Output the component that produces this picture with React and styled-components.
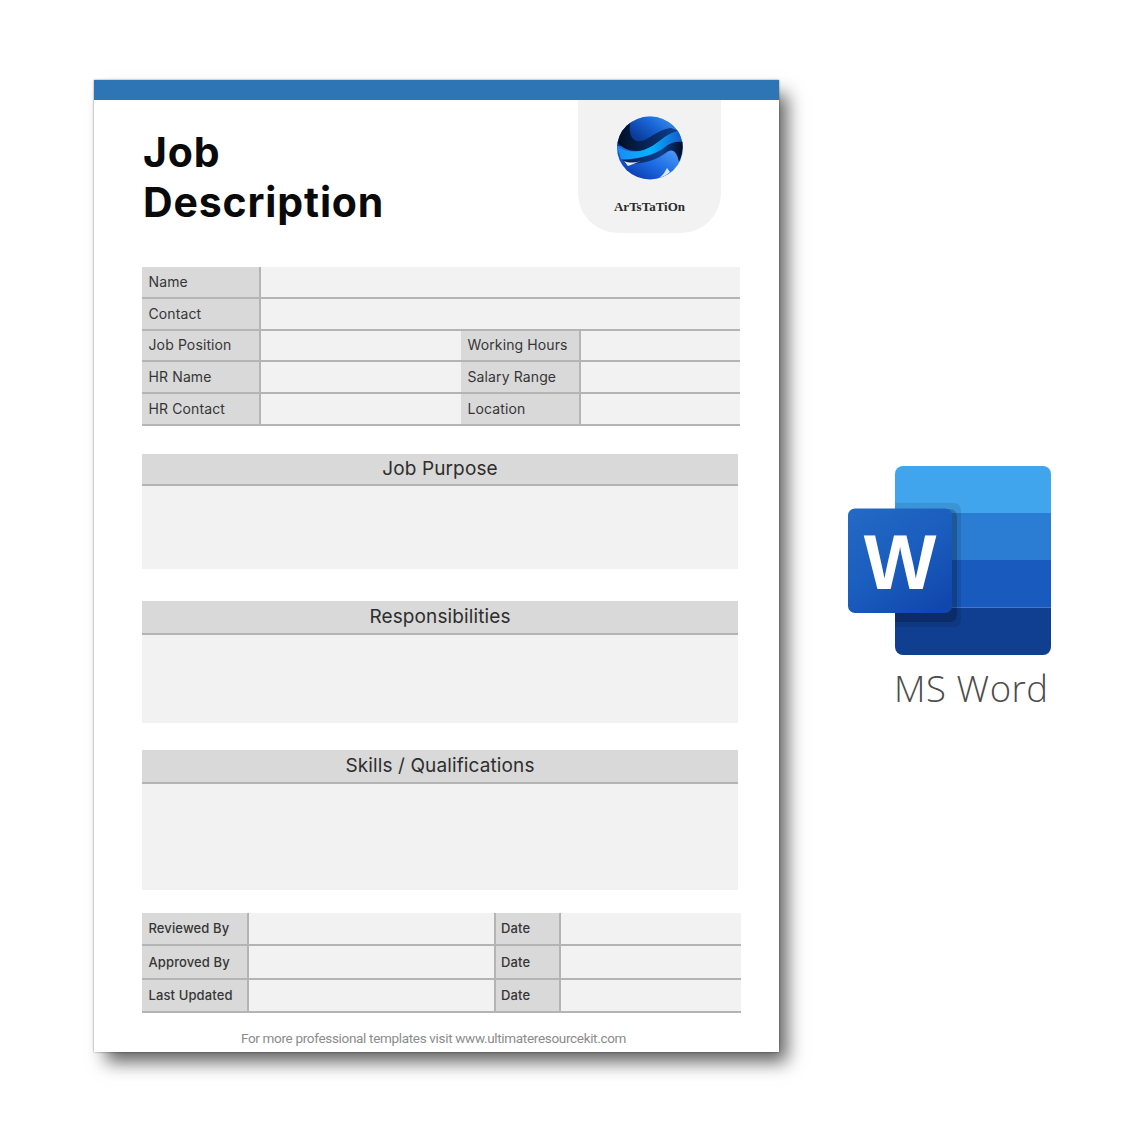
// App.jsx
import React from 'react';
import styled, { createGlobalStyle } from 'styled-components';

const GlobalStyle = createGlobalStyle`
  html, body {
    margin: 0;
    padding: 0;
    background: #fff;
  }
`;

const Stage = styled.div`
  width: 1134px;
  height: 1134px;
  box-sizing: border-box;
  padding: 80px 0 0 94px;
  display: flex;
  align-items: flex-start;
  overflow: hidden;
  font-family: Inter, "Liberation Sans", sans-serif;
`;

const Sheet = styled.div`
  width: 685px;
  height: 972px;
  box-sizing: border-box;
  flex-shrink: 0;
  background: #fff;
  box-shadow: 0 0 2px rgba(0, 0, 0, 0.45), 10px 12px 17px -2px rgba(0, 0, 0, 0.62);
`;

const TopBar = styled.div`
  height: 20px;
  background: #2e75b5;
`;

const Content = styled.div`
  padding-left: 48px;
`;

const Header = styled.div`
  height: 167px;
  width: 579px;
  display: flex;
  justify-content: space-between;
  align-items: flex-start;
`;

const Title = styled.h1`
  margin: 28px 0 0 1px;
  font-size: 41px;
  line-height: 49.5px;
  font-weight: 700;
  color: #0a0a0a;
  letter-spacing: 0.85px;
`;

const LogoBadge = styled.div`
  width: 143px;
  height: 133px;
  background: #f2f2f2;
  border-radius: 0 0 40px 40px;
  display: flex;
  flex-direction: column;
  align-items: center;
  padding-top: 16px;
  box-sizing: border-box;
`;

const LogoName = styled.div`
  margin-top: 19px;
  font-family: "Liberation Serif", serif;
  font-weight: 700;
  font-size: 13px;
  line-height: 16px;
  color: #2b2b2b;
`;

const InfoGrid = styled.div`
  display: grid;
  grid-template-columns: ${({ $columns }) => $columns};
  grid-auto-rows: ${({ $rowHeight }) => $rowHeight}px;
  width: ${({ $width }) => $width}px;
  margin-top: ${({ $top }) => $top || 0}px;
`;

const Label = styled.div`
  background: #d9d9d9;
  border-bottom: 2px solid #b4b4b4;
  border-right: 2px solid #b4b4b4;
  ${({ $ruled }) => $ruled && 'border-left: 2px solid #b4b4b4;'}
  box-sizing: border-box;
  display: flex;
  align-items: center;
  padding: 0 0 1px ${({ $ruled }) => ($ruled ? 5 : 6.5)}px;
  font-size: ${({ $small }) => ($small ? 13 : 14)}px;
  font-weight: ${({ $small }) => ($small ? 500 : 400)};
  letter-spacing: 0.12px;
  color: #363636;
  white-space: nowrap;
`;

const Value = styled.div`
  background: #f2f2f2;
  border-bottom: 2px solid #b4b4b4;
  box-sizing: border-box;
  grid-column: span ${({ $span }) => $span || 1};
`;

const Section = styled.section`
  width: 596px;
  margin-top: ${({ $top }) => $top}px;
`;

const SectionHead = styled.div`
  height: ${({ $height }) => $height}px;
  box-sizing: border-box;
  background: #d9d9d9;
  border-bottom: 2px solid #b4b4b4;
  display: flex;
  align-items: center;
  justify-content: center;
  font-size: 19px;
  letter-spacing: 0.12px;
  color: #2e2e2e;
`;

const SectionBody = styled.div`
  height: ${({ $height }) => $height}px;
  background: #f2f2f2;
`;

const FooterNote = styled.div`
  width: 583px;
  margin-top: 17px;
  text-align: center;
  font-family: Roboto, "Liberation Sans", sans-serif;
  font-size: 13.5px;
  letter-spacing: -0.32px;
  line-height: 17px;
  color: #8c8c8c;
`;

const ProductColumn = styled.div`
  margin: 386px 0 0 69px;
  display: flex;
  flex-direction: column;
  align-items: flex-start;
`;

const ProductName = styled.div`
  margin: 11px 0 0 46px;
  font-family: "Open Sans", sans-serif;
  font-size: 36.5px;
  font-weight: 300;
  line-height: 44px;
  letter-spacing: 0.55px;
  color: #4c4c4c;
  white-space: nowrap;
`;

const SphereLogo = () => (
  <svg width="66" height="64" viewBox="0 0 66 64">
    <defs>
      <linearGradient id="sphereTop" x1="0.9" y1="0" x2="0.15" y2="0.45">
        <stop offset="0" stopColor="#4a9af2" />
        <stop offset="0.5" stopColor="#1a68d8" />
        <stop offset="1" stopColor="#0b3c9c" />
      </linearGradient>
      <linearGradient id="sphereBottom" x1="0.75" y1="0.35" x2="0.35" y2="1">
        <stop offset="0" stopColor="#5aa6fb" />
        <stop offset="0.55" stopColor="#1f6fe6" />
        <stop offset="1" stopColor="#0d40b4" />
      </linearGradient>
      <linearGradient id="sphereBand" x1="0" y1="0" x2="1" y2="0">
        <stop offset="0" stopColor="#1a8cf2" />
        <stop offset="0.5" stopColor="#04b4ff" />
        <stop offset="1" stopColor="#1557c8" />
      </linearGradient>
      <linearGradient id="sphereDark" x1="0" y1="0" x2="1" y2="0">
        <stop offset="0" stopColor="#020f26" />
        <stop offset="0.55" stopColor="#08295f" />
        <stop offset="1" stopColor="#0d4296" />
      </linearGradient>
      <linearGradient id="sphereDarkLow" x1="0" y1="0" x2="1" y2="0">
        <stop offset="0" stopColor="#07204f" />
        <stop offset="0.65" stopColor="#0e3f8f" />
        <stop offset="1" stopColor="#020c20" />
      </linearGradient>
      <clipPath id="sphereClip">
        <ellipse cx="33" cy="32" rx="33" ry="31.5" />
      </clipPath>
    </defs>
    <g clipPath="url(#sphereClip)">
      <rect width="66" height="64" fill="url(#sphereBottom)" />
      <path d="M0 0H66V18L30 30L0 30Z" fill="url(#sphereTop)" />
      <path d="M1 27C2 17 7 9 14 5C11 13 13 23 20 25C30 27 38 14 54 12L62 15C48 17 40 30 27 34C16 37 6 33 1 27Z" fill="url(#sphereDark)" />
      <path d="M14 2C10 5 7 9 6 13C9 8 13 5 19 2Z" fill="#e3eefc" />
      <path d="M0 30C8 36 18 37 27 34C40 30 48 17 62 15L66 27C60 26 54 27 48 31C38 39 18 44 4 43Z" fill="url(#sphereBand)" />
      <path d="M66 26C58 25 53 27 48 31C40 38 24 43 6 44L9 48C28 48 40 44 50 36C56 32 60 36 62 46C65 40 66 33 66 26Z" fill="url(#sphereDarkLow)" />
      <path d="M7 45C12 47 18 47 24 45L11 50Z" fill="#e7eef8" />
      <path d="M50 52C48 56 46 59 42 62C46 61 50 59 53 56Z" fill="#dbe9fb" />
    </g>
  </svg>
);

const WordIcon = () => (
  <svg width="203" height="189" viewBox="0 0 203 189">
    <defs>
      <linearGradient id="wordTile" x1="0.15" y1="0" x2="0.85" y2="1">
        <stop offset="0" stopColor="#2368c4" />
        <stop offset="0.5" stopColor="#1a5dbe" />
        <stop offset="1" stopColor="#1146ac" />
      </linearGradient>
      <clipPath id="wordSheet">
        <rect x="47" width="156" height="189" rx="8" />
      </clipPath>
    </defs>
    <g clipPath="url(#wordSheet)">
      <rect x="47" width="156" height="47.5" fill="#41a5ee" />
      <rect x="47" y="47" width="156" height="47.5" fill="#2b7cd3" />
      <rect x="47" y="94" width="156" height="47.5" fill="#185abd" />
      <rect x="47" y="141.5" width="156" height="47.5" fill="#103f91" />
      <rect x="30" y="37" width="83" height="124" rx="7" fill="#000" opacity="0.1" />
      <rect x="30" y="43" width="79" height="113" rx="7" fill="#000" opacity="0.2" />
    </g>
    <rect y="42.500" width="104" height="104.500" rx="7" fill="url(#wordTile)" />
    <text x="52" y="122.500" textAnchor="middle" fontFamily="Liberation Sans, sans-serif" fontWeight="700" fontSize="77" fill="#fff">W</text>
  </svg>
);

const topRows = [
  { label: 'Name' },
  { label: 'Contact' },
  { label: 'Job Position', side: 'Working Hours' },
  { label: 'HR Name', side: 'Salary Range' },
  { label: 'HR Contact', side: 'Location' },
];

const signRows = ['Reviewed By', 'Approved By', 'Last Updated'];

const sections = [
  { title: 'Job Purpose', top: 28, head: 32, body: 83 },
  { title: 'Responsibilities', top: 32, head: 34, body: 88 },
  { title: 'Skills / Qualifications', top: 27, head: 34, body: 106 },
];

const App = () => (
  <>
    <GlobalStyle />
    <Stage>
      <Sheet>
        <TopBar />
        <Content>
          <Header>
            <Title>
              Job
              <br />
              Description
            </Title>
            <LogoBadge>
              <SphereLogo />
              <LogoName>ArTsTaTiOn</LogoName>
            </LogoBadge>
          </Header>

          <InfoGrid $columns="119px 200px 120px 159px" $rowHeight={31.8} $width={598}>
            {topRows.map((row) => (
              <React.Fragment key={row.label}>
                <Label>{row.label}</Label>
                {row.side ? (
                  <>
                    <Value />
                    <Label>{row.side}</Label>
                    <Value />
                  </>
                ) : (
                  <Value $span={3} />
                )}
              </React.Fragment>
            ))}
          </InfoGrid>

          {sections.map((section) => (
            <Section key={section.title} $top={section.top}>
              <SectionHead $height={section.head}>{section.title}</SectionHead>
              <SectionBody $height={section.body} />
            </Section>
          ))}

          <InfoGrid $columns="107px 245px 67px 180px" $rowHeight={33.4} $width={599} $top={23}>
            {signRows.map((label) => (
              <React.Fragment key={label}>
                <Label $small>{label}</Label>
                <Value />
                <Label $small $ruled>Date</Label>
                <Value />
              </React.Fragment>
            ))}
          </InfoGrid>

          <FooterNote>For more professional templates visit www.ultimateresourcekit.com</FooterNote>
        </Content>
      </Sheet>

      <ProductColumn>
        <WordIcon />
        <ProductName>MS Word</ProductName>
      </ProductColumn>
    </Stage>
  </>
);

export default App;
